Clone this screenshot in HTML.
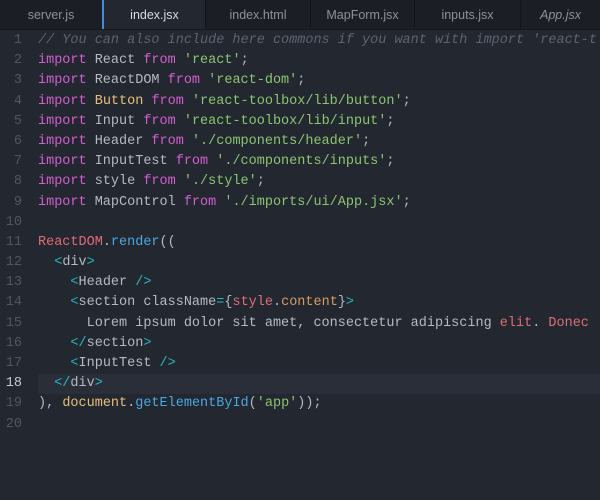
<!DOCTYPE html>
<html><head><style>
html,body{margin:0;width:600px;height:500px;overflow:hidden;}
body{background:#222730;font-family:"Liberation Mono",monospace;position:relative;}
.tabs{position:absolute;top:0;left:0;width:600px;height:30px;background:#1b1f25;border-bottom:1px solid #15181d;box-sizing:border-box;overflow:hidden;}
.tab{position:absolute;top:0;height:30px;line-height:30px;text-align:center;font-family:"Liberation Sans",sans-serif;font-size:12.5px;color:#8a929c;border-left:1px solid #111418;box-sizing:border-box;}
.tab.act{background:#222730;color:#d7dae0;border-left:2px solid #3a8ee6;height:31px;}
.code{position:absolute;top:31px;left:0;width:600px;height:469px;font-size:13.5px;overflow:hidden;}
.l{height:20.2px;line-height:20.2px;white-space:pre;position:relative;}
.n{position:absolute;left:0;width:22px;text-align:right;color:#4f5763;}
.t{position:absolute;left:38px;color:#b4bac3;}
.cur{background:#292e38;margin-left:38px;}
.cur .n{left:-38px;color:#c8ccd2}
.cur .t{left:0}
.k{color:#d25fd0}.s{color:#8cc570}.c{color:#5c6470;font-style:italic}.y{color:#e5c07b}.r{color:#e06c75}.b{color:#4aa8e0}.g{color:#2bb5c0}.o{color:#d99a5e}
</style></head><body>
<div class="tabs">
<div class="tab" style="left:0;width:102px;border-left:none">server.js</div>
<div class="tab act" style="left:102px;width:103px">index.jsx</div>
<div class="tab" style="left:205px;width:105px">index.html</div>
<div class="tab" style="left:310px;width:104px">MapForm.jsx</div>
<div class="tab" style="left:414px;width:106px">inputs.jsx</div>
<div class="tab" style="left:520px;width:80px;font-style:italic">App.jsx</div>
</div>
<div class="code">
<div class="l"><span class="n">1</span><span class="t"><span class="c">// You can also include here commons if you want with import 'react-t</span></span></div>
<div class="l"><span class="n">2</span><span class="t"><span class="k">import</span> React <span class="k">from</span> <span class="s">'react'</span>;</span></div>
<div class="l"><span class="n">3</span><span class="t"><span class="k">import</span> ReactDOM <span class="k">from</span> <span class="s">'react-dom'</span>;</span></div>
<div class="l"><span class="n">4</span><span class="t"><span class="k">import</span> <span class="y">Button</span> <span class="k">from</span> <span class="s">'react-toolbox/lib/button'</span>;</span></div>
<div class="l"><span class="n">5</span><span class="t"><span class="k">import</span> Input <span class="k">from</span> <span class="s">'react-toolbox/lib/input'</span>;</span></div>
<div class="l"><span class="n">6</span><span class="t"><span class="k">import</span> Header <span class="k">from</span> <span class="s">'./components/header'</span>;</span></div>
<div class="l"><span class="n">7</span><span class="t"><span class="k">import</span> InputTest <span class="k">from</span> <span class="s">'./components/inputs'</span>;</span></div>
<div class="l"><span class="n">8</span><span class="t"><span class="k">import</span> style <span class="k">from</span> <span class="s">'./style'</span>;</span></div>
<div class="l"><span class="n">9</span><span class="t"><span class="k">import</span> MapControl <span class="k">from</span> <span class="s">'./imports/ui/App.jsx'</span>;</span></div>
<div class="l"><span class="n">10</span><span class="t"></span></div>
<div class="l"><span class="n">11</span><span class="t"><span class="r">ReactDOM</span>.<span class="b">render</span>((</span></div>
<div class="l"><span class="n">12</span><span class="t">  <span class="g">&lt;</span>div<span class="g">&gt;</span></span></div>
<div class="l"><span class="n">13</span><span class="t">    <span class="g">&lt;</span>Header <span class="g">/&gt;</span></span></div>
<div class="l"><span class="n">14</span><span class="t">    <span class="g">&lt;</span>section className<span class="g">=</span>{<span class="r">style</span>.<span class="o">content</span>}<span class="g">&gt;</span></span></div>
<div class="l"><span class="n">15</span><span class="t">      Lorem ipsum dolor sit amet, consectetur adipiscing <span class="r">elit</span>. <span class="r">Donec</span></span></div>
<div class="l"><span class="n">16</span><span class="t">    <span class="g">&lt;/</span>section<span class="g">&gt;</span></span></div>
<div class="l"><span class="n">17</span><span class="t">    <span class="g">&lt;</span>InputTest <span class="g">/&gt;</span></span></div>
<div class="l cur"><span class="n">18</span><span class="t">  <span class="g">&lt;/</span>div<span class="g">&gt;</span></span></div>
<div class="l"><span class="n">19</span><span class="t">), <span class="y">document</span>.<span class="b">getElementById</span>(<span class="s">'app'</span>));</span></div>
<div class="l"><span class="n">20</span><span class="t"></span></div>
</div>
</body></html>
